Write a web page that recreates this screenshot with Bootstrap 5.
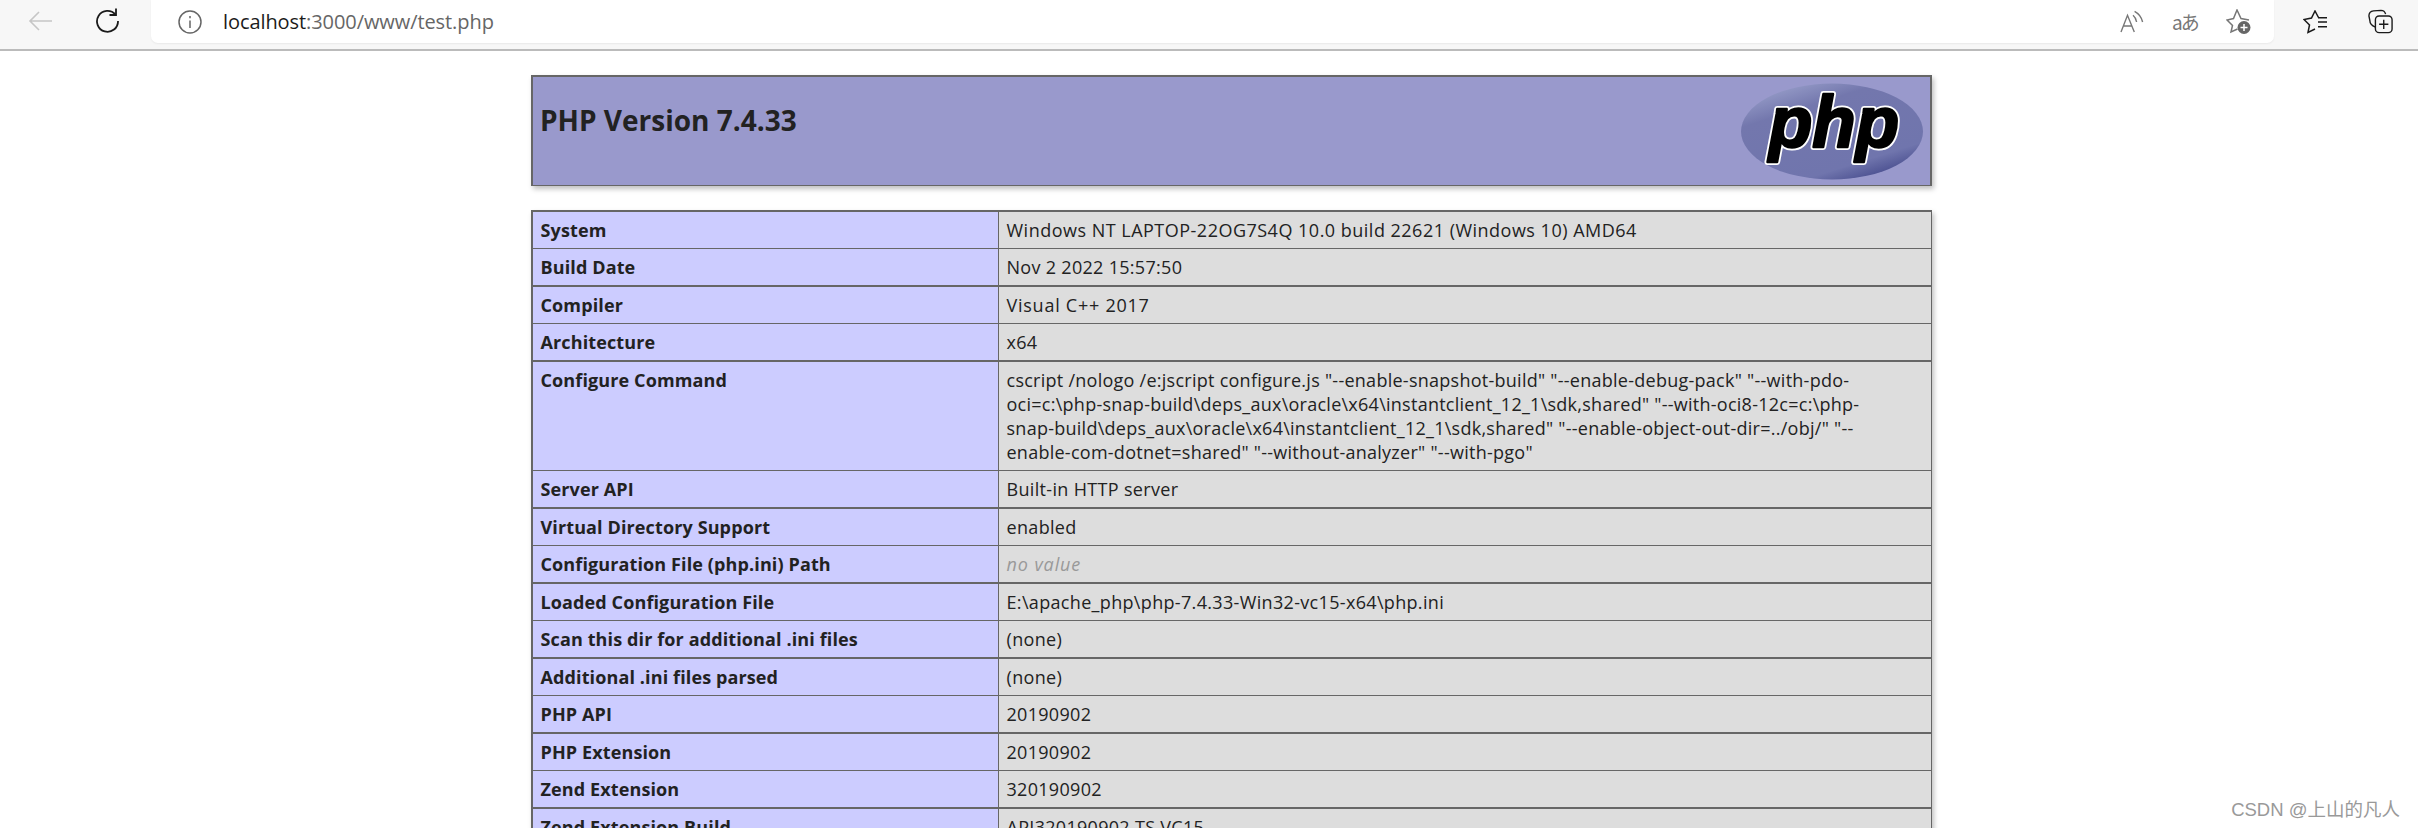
<!DOCTYPE html>
<html lang="en">
<head>
<meta charset="utf-8">
<title>PHP 7.4.33 - phpinfo()</title>
<link href="https://cdn.jsdelivr.net/npm/bootstrap@5.3.0/dist/css/bootstrap.min.css" rel="stylesheet">
<style>
html,body{height:828px;overflow:hidden;background:#fff}
body{font-family:"Open Sans","Noto Sans",sans-serif;color:#222}
.chrome-bar{height:51px;background:#f7f7f7;border-bottom:2px solid #bbb;padding-left:28px}
.back-ico{width:25px;height:24px;margin-right:42px}
.reload-ico{width:25px;height:26px;margin-right:31px}
.addr-box{width:2123px;height:43px;background:#fff;border-radius:0 0 7px 7px;box-shadow:0 1px 2px rgba(0,0,0,.06);padding:0 22px 0 27px}
.addr-url{font-size:20px;line-height:43px;color:#666;margin-left:21px;font-family:"Open Sans",sans-serif;letter-spacing:-.08px}
.addr-url b{font-weight:400;color:#1b1b1b}
.tool-gap{gap:28px}
.aa-glyph{font:19px/24px "Noto Sans CJK JP",sans-serif;color:#777;width:26px;white-space:nowrap;letter-spacing:-2px}
.tail-icons{gap:41px;margin-left:29px;height:43px}
.php-sheet{width:1401px;margin:24px 0 0 531px}
.php-head{height:111px;background:#99c;border:2px solid #666;border-bottom-width:1px;box-shadow:2px 3px 5px rgba(0,0,0,.25);padding:0 6px 0 7px}
.php-title{font-size:28px;font-weight:700;line-height:36px;margin:25px 0 0;color:#222}
.php-logo{width:183px;height:98px;margin-top:6px}
.php-grid{table-layout:fixed;width:1401px;border-collapse:separate;border-spacing:0;margin:24px 0 0;border:2px solid #666;border-bottom:0;border-right-width:1px;box-shadow:2px 3px 5px rgba(0,0,0,.25)}
.php-grid>tbody>tr>*{font-size:18px;line-height:24px;padding:6px 7.5px;vertical-align:baseline;border:0;border-bottom:1px solid #666;color:#222;box-shadow:none;letter-spacing:.33px}
.php-grid>tbody>tr:nth-child(even)>*{border-bottom-width:2px}
.php-grid>tbody>tr>th{width:466px;background:#ccf;font-weight:700;border-right:1px solid #666;letter-spacing:.12px}
.php-grid>tbody>tr>td{background:#ddd}
.php-grid>tbody>tr>td.sys-cell{letter-spacing:.49px}
.php-grid>tbody>tr>td.cfg-cell{letter-spacing:.26px}
.php-grid>tbody>tr>td.num-cell{letter-spacing:.3px}
.php-grid>tbody>tr>td.cpp-cell{letter-spacing:.75px}
.no-val{color:#999;font-style:italic;letter-spacing:.9px}
.mark-csdn{position:absolute;right:18px;bottom:6px;font:18.5px/24px "Liberation Sans","Noto Sans CJK SC",sans-serif;color:#999}
</style>
</head>
<body>
<div class="chrome-bar d-flex align-items-start">
  <svg class="back-ico mt-2" viewBox="0 0 25 24" fill="none" stroke="#c6c6c6" stroke-width="1.6"><path d="M24 13H2M11 4l-9 9 9 9"/></svg>
  <svg class="reload-ico mt-2" viewBox="0 0 25 26" fill="none" stroke="#1a1a1a" stroke-width="1.8"><path d="M20.500 6.500A10.500 10.500 0 1 0 23 13"/><path d="M21 0.500v6.500h-6.500"/></svg>
  <div class="addr-box d-flex align-items-center">
    <svg width="24" height="24" viewBox="0 0 24 24" fill="none" stroke="#666" stroke-width="1.5"><circle cx="12" cy="12" r="11"/><path d="M12 10.500v7.500M12 6v2.200"/></svg>
    <span class="addr-url"><b>localhost</b>:3000/www/test.php</span>
    <div class="ms-auto d-flex align-items-center tool-gap">
      <svg width="24" height="24" viewBox="0 0 24 24" fill="none" stroke="#777" stroke-width="1.4"><path d="M1 22 7.500 5.300 14.300 22M3.500 16h8M13 5.300q3 2.500 3.600 6.700M14.600 1.300q6.500 3.500 8 10.700"/></svg>
      <span class="aa-glyph">aあ</span>
      <svg width="26" height="26" viewBox="0 0 26 26" fill="none" stroke="#777" stroke-width="1.500"><path d="M23 11 15 9.500 11 1 7.500 9.500 1 11l5.500 5.500L5 23l6.500-3"/><circle cx="18" cy="18.500" r="6.500" fill="#666" stroke="none"/><path d="M18 15v7M14.500 18.500h7" stroke="#fff"/></svg>
    </div>
  </div>
  <div class="tail-icons d-flex align-items-center">
    <svg width="24" height="24" viewBox="0 0 24 24" fill="none" stroke="#1a1a1a" stroke-width="1.500"><path d="M15.500 7.500 12 1 8.500 8 1 9.500 6.500 15 5 22.500l7-3.500M15 7.700h9M15 12h9M15 16.700h9"/></svg>
    <svg width="25" height="25" viewBox="0 0 27 26" fill="none" stroke="#1a1a1a" stroke-width="1.500"><rect x="8" y="7" width="18" height="18" rx="4"/><path d="M17 11v10M12 16h10M8 19Q2 17 2 12L1 7q0-5 5-5.500l8-.5q4 0 5 4"/></svg>
  </div>
</div>

<main class="php-sheet">
  <div class="php-head d-flex justify-content-between align-items-start">
    <h1 class="php-title">PHP Version 7.4.33</h1>
    <svg class="php-logo" viewBox="0 0 183 98" role="img" aria-label="PHP logo">
      <defs>
        <linearGradient id="eg" x1="0.200" y1="0" x2="0.800" y2="1"><stop offset="0" stop-color="#9aa0cb"/><stop offset=".25" stop-color="#7377ad"/><stop offset=".8" stop-color="#7075ad"/><stop offset="1" stop-color="#3f4487"/></linearGradient>
        <text id="ptxt" x="93" y="64" text-anchor="middle" font-family="Liberation Sans" font-weight="700" font-style="italic" font-size="72" textLength="130" lengthAdjust="spacingAndGlyphs">php</text>
      </defs>
      <ellipse cx="91" cy="48.500" rx="91" ry="48" fill="url(#eg)"/>
      <use href="#ptxt" fill="#fff" stroke="#fff" stroke-width="6" stroke-linejoin="round"/>
      <use href="#ptxt" fill="#000" stroke="#000" stroke-width="2.400" stroke-linejoin="round"/>
    </svg>
  </div>
  <table class="table php-grid">
    <tbody>
      <tr><th>System</th><td class="sys-cell">Windows NT LAPTOP-22OG7S4Q 10.0 build 22621 (Windows 10) AMD64</td></tr>
      <tr><th>Build Date</th><td class="num-cell">Nov 2 2022 15:57:50</td></tr>
      <tr><th>Compiler</th><td class="cpp-cell">Visual C++ 2017</td></tr>
      <tr><th>Architecture</th><td class="num-cell">x64</td></tr>
      <tr><th>Configure Command</th><td class="cfg-cell">cscript /nologo /e:jscript configure.js "--enable-snapshot-build" "--enable-debug-pack" "--with-pdo-<br>oci=c:\php-snap-build\deps_aux\oracle\x64\instantclient_12_1\sdk,shared" "--with-oci8-12c=c:\php-<br>snap-build\deps_aux\oracle\x64\instantclient_12_1\sdk,shared" "--enable-object-out-dir=../obj/" "--<br>enable-com-dotnet=shared" "--without-analyzer" "--with-pgo"</td></tr>
      <tr><th>Server API</th><td>Built-in HTTP server</td></tr>
      <tr><th>Virtual Directory Support</th><td>enabled</td></tr>
      <tr><th>Configuration File (php.ini) Path</th><td><i class="no-val">no value</i></td></tr>
      <tr><th>Loaded Configuration File</th><td>E:\apache_php\php-7.4.33-Win32-vc15-x64\php.ini</td></tr>
      <tr><th>Scan this dir for additional .ini files</th><td>(none)</td></tr>
      <tr><th>Additional .ini files parsed</th><td>(none)</td></tr>
      <tr><th>PHP API</th><td class="num-cell">20190902</td></tr>
      <tr><th>PHP Extension</th><td class="num-cell">20190902</td></tr>
      <tr><th>Zend Extension</th><td class="num-cell">320190902</td></tr>
      <tr><th>Zend Extension Build</th><td class="num-cell">API320190902,TS,VC15</td></tr>
    </tbody>
  </table>
</main>
<div class="mark-csdn">CSDN @上山的凡人</div>
<script src="https://cdn.jsdelivr.net/npm/bootstrap@5.3.0/dist/js/bootstrap.bundle.min.js"></script>
</body>
</html>
